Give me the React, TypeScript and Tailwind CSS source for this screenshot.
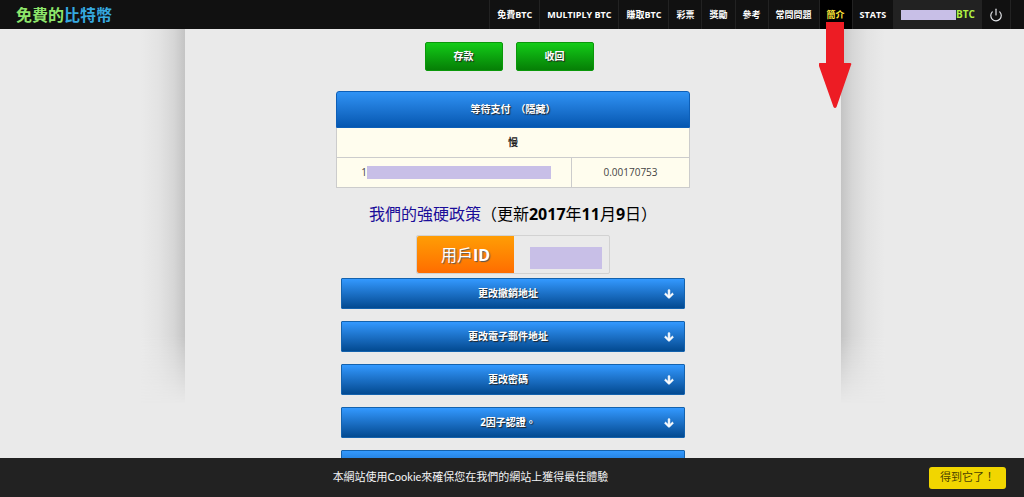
import { useState } from 'react';
import { Power } from 'lucide-react';
import { FaArrowDown } from 'react-icons/fa';

type NavItem = {
  label: string;
  active?: boolean;
};

const navItems: NavItem[] = [
  { label: '免費BTC' },
  { label: 'MULTIPLY BTC' },
  { label: '賺取BTC' },
  { label: '彩票' },
  { label: '獎勵' },
  { label: '參考' },
  { label: '常問問題' },
  { label: '簡介', active: true },
  { label: 'STATS' },
];

const settings = ['更改撤銷地址', '更改電子郵件地址', '更改密碼', '2因子認證。', ''];

function Arrow() {
  return (
    <svg
      className="pointer-events-none absolute top-[22px] left-1/2 z-10 -translate-x-1/2"
      width="34"
      height="87"
      viewBox="0 0 34 87"
      aria-hidden="true"
    >
      <path
        d="M7 0h18v41h6q2 0 1 2L17.500 85q-1.500 2-3 0L0 44q-1-3 1-3h6z"
        fill="#ed1c24"
      />
    </svg>
  );
}

function Header() {
  return (
    <header className="flex h-[29px] bg-[#111] text-[9px] font-bold text-white">
      <a href="#" className="flex items-center pl-4 text-base">
        <span className="text-[#8ee66b]">免費的</span>
        <span className="text-[#36a9e0]">比特幣</span>
      </a>
      <nav className="mr-[13px] ml-auto flex border-l border-[#222]">
        {navItems.map((item) => (
          <a
            key={item.label}
            href="#"
            className={`relative flex items-center border-r border-[#222] px-[7px] whitespace-nowrap ${
              item.active ? 'bg-black text-[#ffe83b]' : ''
            }`}
          >
            {item.label}
            {item.active && <Arrow />}
          </a>
        ))}
        <a href="#" className="flex items-center bg-[#222] px-[7px] text-[10px] text-[#b3f244]">
          <span className="h-[10px] w-[55px] bg-[#c8bfe7]" />
          BTC
        </a>
        <button type="button" aria-label="登出" className="flex w-[29px] items-center justify-center border-r border-[#222]">
          <Power size={14} className="text-gray-200" />
        </button>
      </nav>
    </header>
  );
}

function PaymentsTable() {
  return (
    <table className="mt-5 w-[354px] table-fixed border-separate border-spacing-0 text-center text-[10px]">
      <colgroup>
        <col className="w-2/3" />
        <col className="w-1/3" />
      </colgroup>
      <thead>
        <tr className="h-[37px]">
          <th
            colSpan={2}
            className="rounded-t-[3px] border border-[#0d5fb8] bg-linear-to-b from-[#3093f5] to-[#0557b0] p-0 text-white text-shadow-[1px_1px_1px_#222]"
          >
            等待支付&nbsp; （隱藏）
          </th>
        </tr>
      </thead>
      <tbody className="bg-[#fffdee]">
        <tr className="h-[30px]">
          <th colSpan={2} className="border-x border-b border-[#ccc] p-0 text-[#222]">
            慢
          </th>
        </tr>
        <tr className="h-[30px] text-[#444]">
          <td className="border-x border-b border-[#ccc] p-0 pl-1">
            <div className="flex items-center justify-center">
              1
              <span className="h-[13px] w-[184px] bg-[#c8bfe7]" />
            </div>
          </td>
          <td className="border-r border-b border-[#ccc] p-0">0.00170753</td>
        </tr>
      </tbody>
    </table>
  );
}

function CookieBar({ onClose }: { onClose: () => void }) {
  return (
    <div className="fixed inset-x-0 bottom-0 flex h-[39px] items-center bg-[#222] pr-[18px] pl-3 font-['Lato','Noto_Sans_CJK_TC',sans-serif] text-[11px] text-gray-100">
      <p className="flex-1 text-center">本網站使用Cookie來確保您在我們的網站上獲得最佳體驗</p>
      <button
        type="button"
        onClick={onClose}
        className="h-[22px] w-[77px] rounded-[3px] bg-[#f1d600] text-[#4a4200]"
      >
        得到它了！
      </button>
    </div>
  );
}

export default function App() {
  const [showCookies, setShowCookies] = useState(true);

  return (
    <div className="min-h-screen bg-[#eaeaea] font-['Open_Sans','Noto_Sans_CJK_TC',sans-serif]">
      <Header />

      <div className="flex pl-0.5">
        {/* left shadow of the content column */}
        <div className="flex flex-1 justify-end">
          <div className="h-[375px] w-11 bg-[linear-gradient(to_left,#c4c4c4,#d6d6d6_25%,#e3e3e3_60%,#eaeaea)] mask-[linear-gradient(to_bottom,black_82%,transparent)]" />
        </div>

        <main className="flex w-[656px] flex-col items-center pt-[13px]">
          <div className="flex gap-[13px] pr-2">
            {['存款', '收回'].map((label) => (
              <button
                key={label}
                type="button"
                className="h-[29px] w-[78px] rounded-[2px] border border-[#0a980a] bg-linear-to-b from-[#13cc18] to-[#067f06] text-[10px] font-bold text-white text-shadow-[1px_1px_1px_#222]"
              >
                {label}
              </button>
            ))}
          </div>

          <PaymentsTable />

          <h2 className="mt-[14px] text-base leading-6 font-bold text-black">
            <a href="#" className="font-normal text-[#1a0d99]">
              我們的強硬政策
            </a>
            <span className="font-normal">（更新</span>2017<span className="font-normal">年</span>11
            <span className="font-normal">月</span>9<span className="font-normal">日）</span>
          </h2>

          <div className="mt-[9px] flex h-[39px] w-[194px] rounded-[2px] border border-[#d2d2d2]">
            <div className="flex w-[97px] items-center justify-center rounded-l-[2px] bg-linear-to-b from-[#ff9d05] to-[#ff6c00] text-base font-bold text-white text-shadow-[1px_1px_1px_#555]">
              <span className="font-normal">用戶</span>ID
            </div>
            <div className="flex flex-1 items-center pt-[6px] pl-4">
              <span className="h-[22px] w-[72px] bg-[#c8bfe7]" />
            </div>
          </div>

          <div className="mt-1 flex w-[344px] flex-col gap-3">
            {settings.map((label) => (
              <button
                key={label}
                type="button"
                className="flex h-[31px] items-center rounded-[1px] border border-[#1462ad] bg-linear-to-b from-[#3399ff] to-[#034a91] px-[10px] text-[10px] font-bold text-white text-shadow-[1px_1px_1px_#222]"
              >
                <span className="flex-1">{label}</span>
                <FaArrowDown size={10} stroke="currentColor" strokeWidth={40} />
              </button>
            ))}
          </div>
        </main>

        <div className="flex-1">
          <div className="h-[375px] w-11 bg-[linear-gradient(to_right,#c4c4c4,#d6d6d6_25%,#e3e3e3_60%,#eaeaea)] mask-[linear-gradient(to_bottom,black_82%,transparent)]" />
        </div>
      </div>

      {showCookies && <CookieBar onClose={() => setShowCookies(false)} />}
    </div>
  );
}
